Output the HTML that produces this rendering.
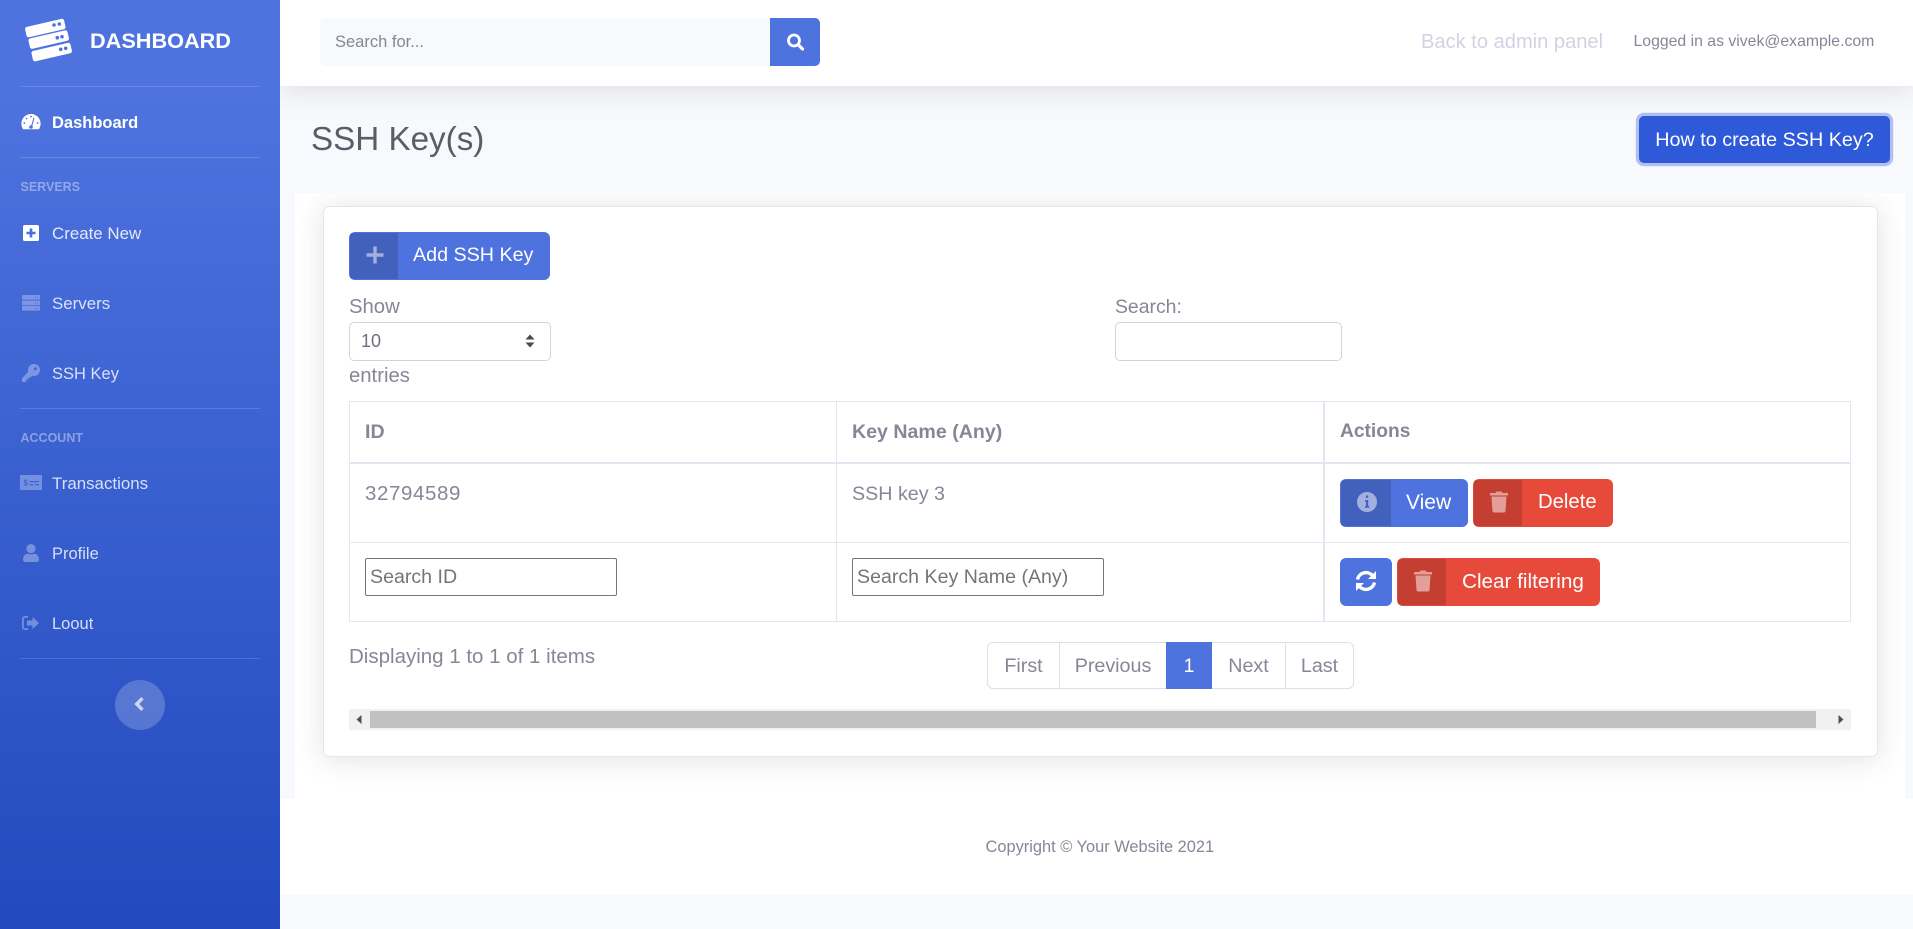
<!DOCTYPE html>
<html lang="en"><head><meta charset="utf-8"><title>SSH Key(s)</title>
<style>
html,body{margin:0;padding:0;width:1913px;height:929px;overflow:hidden;background:#f8f9fc;font-family:"Liberation Sans",sans-serif;color:#858796}
*{box-sizing:border-box}
.a{position:absolute}
.t{position:absolute;white-space:nowrap;line-height:24px;height:24px}
.side{left:0;top:0;width:280px;height:929px;background:linear-gradient(180deg,#4e73df 10%,#224abe 100%);z-index:3}
.hr{position:absolute;left:20px;width:240px;height:1px;background:rgba(255,255,255,.15)}
.nav{font-size:16.9px;color:rgba(255,255,255,.8);left:52px}
.hd{font-size:12.5px;font-weight:700;color:rgba(255,255,255,.4);left:20.5px}
.top{left:280px;top:0;width:1633px;height:86px;background:#fff;box-shadow:0 2.4px 28px rgba(58,59,69,.15);z-index:2}
.b{font-size:19.6px;font-weight:700}
.f{font-size:19.5px}
.btn{position:absolute;height:48px;border-radius:6px;color:#fff;font-size:19.7px;line-height:47px;overflow:hidden;white-space:nowrap}
.blue{background:#4e73df}.red{background:#e74a3b}
.ic{position:absolute;left:1px;top:1px;bottom:1px;width:48px;background:rgba(0,0,0,.15)}
.ic svg{position:absolute;left:calc(50% + .5px);top:calc(50% - 1.5px);transform:translate(-50%,-50%)}
.line{position:absolute;background:#e3e6f0}
input{position:absolute;font-family:"Liberation Sans",sans-serif;font-size:19.6px;padding:0 4px;margin:0;background:#fff;border:1px solid #767676;border-radius:2px;height:38px;width:252px}
input::placeholder{color:#757575;opacity:1}
.fc{position:absolute;height:39px;background:#fff;border:1px solid #d1d3e2;border-radius:5px}
.pg{position:absolute;top:642px;height:47px;line-height:46px;text-align:center;font-size:19.7px;color:#858796;background:#fff;border:1px solid #dddfeb}
</style></head><body>

<div class="a" style="left:280px;top:86px;width:1633px;height:843px;background:#f8f9fc"></div>
<div class="a" style="left:295px;top:193px;width:1610px;height:606px;background:#fff;overflow:hidden">
  <div class="a" style="left:28px;top:13px;width:1555px;height:551px;background:#fff;border:1px solid #e3e6f0;border-radius:6px;box-shadow:0 2.4px 28px rgba(58,59,69,.15)"></div>
</div>
<div class="a" style="left:280px;top:799px;width:1633px;height:96px;background:#fff"></div>

<!-- sidebar -->
<div class="a side">
  <svg class="a" style="left:20px;top:12px" width="60" height="56" viewBox="0 0 60 56">
    <g fill="#fff">
      <rect x="5.300" y="10.700" width="40" height="10.700" rx="2.200" transform="rotate(-13 25.300 16)"/>
      <rect x="8.700" y="22.200" width="40" height="10.700" rx="2.200" transform="rotate(-13 28.700 27.500)"/>
      <rect x="11.700" y="34.700" width="40" height="10.700" rx="2.200" transform="rotate(-13 31.700 40)"/>
    </g>
    <g fill="#4e73df">
      <circle cx="34" cy="13" r="1.800"/><circle cx="39.300" cy="12" r="1.800"/>
      <circle cx="37.300" cy="25.700" r="1.800"/><circle cx="42" cy="24.700" r="1.800"/>
      <circle cx="40.700" cy="37.300" r="1.800"/><circle cx="45.700" cy="36.300" r="1.800"/>
    </g>
  </svg>
  <div class="t" style="left:90px;top:29px;font-size:21.7px;font-weight:700;color:#fff">DASHBOARD</div>
  <div class="hr" style="top:86px"></div>
  <svg class="a" style="left:21px;top:113px" width="20" height="17" viewBox="0 0 20 17">
    <path fill="#fff" d="M10 1A9.6 9.6 0 0 0 .4 10.600c0 2.100.6 4 1.700 5.600h15.800c1.100-1.600 1.700-3.500 1.700-5.600A9.600 9.600 0 0 0 10 1z"/>
    <path stroke="#4e73df" stroke-width="1.100" fill="none" d="M10.500 13.500 13 5"/>
    <circle cx="10" cy="14" r="1.800" fill="#4e73df"/>
    <g fill="#4e73df"><circle cx="10" cy="3.600" r=".9"/><circle cx="5.500" cy="5.500" r=".9"/><circle cx="3.300" cy="10" r=".9"/><circle cx="16.700" cy="10" r=".9"/></g>
  </svg>
  <div class="t nav" style="top:111px;font-weight:700;color:#fff;font-size:16.5px">Dashboard</div>
  <div class="hr" style="top:157px"></div>
  <div class="t hd" style="top:175px">SERVERS</div>
  <svg class="a" style="left:23px;top:225px" width="16" height="16" viewBox="0 0 16 16">
    <rect width="16" height="16" rx="1.800" fill="#fff"/><path fill="#4872db" d="M6.700 3.500h2.600v3.200h3.200v2.600H9.300v3.200H6.700V9.300H3.500V6.700h3.200z"/>
  </svg>
  <div class="t nav" style="top:222px;color:rgba(255,255,255,.85)">Create New</div>
  <svg class="a" style="left:22px;top:295px" width="18" height="16" viewBox="0 0 18 16">
    <g fill="rgba(255,255,255,.3)"><rect width="18" height="4.600" rx=".8"/><rect y="5.600" width="18" height="4.600" rx=".3"/><rect y="11" width="18" height="4.600" rx=".8"/></g>
    <g fill="#4468d6"><rect x="13" y="2" width="1" height="1"/><rect x="15" y="2" width="1" height="1"/><rect x="13" y="7.500" width="1" height="1"/><rect x="15" y="7.500" width="1" height="1"/><rect x="13" y="13" width="1" height="1"/><rect x="15" y="13" width="1" height="1"/></g>
  </svg>
  <div class="t nav" style="top:292px">Servers</div>
  <svg class="a" style="left:22px;top:364px" width="18" height="18" viewBox="0 0 18 18">
    <path fill="rgba(255,255,255,.32)" fill-rule="evenodd" d="M12 0a6 6 0 0 0-5.700 7.900L0 14.200V18h4v-2.200h2.200v-2.200h2.200l1.700-1.900A6 6 0 1 0 12 0zm1.300 3.200a1.500 1.500 0 1 1 0 3 1.500 1.500 0 0 1 0-3z"/>
  </svg>
  <div class="t nav" style="top:362px;font-size:16.5px">SSH Key</div>
  <div class="hr" style="top:408px"></div>
  <div class="t hd" style="top:426px">ACCOUNT</div>
  <svg class="a" style="left:20px;top:475px" width="22" height="15" viewBox="0 0 22 15">
    <rect width="22" height="15" fill="rgba(255,255,255,.3)"/>
    <path fill="#3f62d2" d="M9.500 6h9.500v1.300H9.500zM9.500 9h3.800v1.300H9.500zM15 9h4v1.300h-4z"/>
    <text x="3.500" y="10.500" font-size="8" font-weight="700" fill="#3f62d2" font-family="Liberation Sans">$</text>
  </svg>
  <div class="t nav" style="top:472px">Transactions</div>
  <svg class="a" style="left:23px;top:544px" width="16" height="18" viewBox="0 0 16 18">
    <g fill="rgba(255,255,255,.32)"><circle cx="8" cy="4.600" r="4.600"/><path d="M0 15.500c0-3.800 2.500-5.800 4.700-5.800 1 0 1.800.6 3.300.6s2.300-.6 3.300-.6c2.200 0 4.700 2 4.700 5.800 0 1.500-1 2.500-2.300 2.500H2.300C1 18 0 17 0 15.500z"/></g>
  </svg>
  <div class="t nav" style="top:542px;font-size:16.5px">Profile</div>
  <svg class="a" style="left:22px;top:616px" width="17" height="14" viewBox="0 0 17 14">
    <g fill="rgba(255,255,255,.32)"><path d="M6 0v1.800H3A1.200 1.200 0 0 0 1.800 3v8c0 .7.500 1.200 1.200 1.200h3V14H3a3 3 0 0 1-3-3V3a3 3 0 0 1 3-3z"/><path d="M10.500.8 17 7l-6.500 6.200V9.500H5v-5h5.500z"/></g>
  </svg>
  <div class="t nav" style="top:612px;font-size:16.5px">Loout</div>
  <div class="hr" style="top:658px"></div>
  <div class="a" style="left:115px;top:680px;width:50px;height:50px;border-radius:50%;background:rgba(255,255,255,.2)"></div>
  <svg class="a" style="left:133px;top:697px" width="13" height="14" viewBox="0 0 13 14">
    <path fill="none" stroke="rgba(255,255,255,.7)" stroke-width="3.400" d="M9.500 1.200 3.700 7l5.800 5.800"/>
  </svg>
</div>

<!-- topbar -->
<div class="a top"></div>
<div class="a" style="left:320px;top:18px;width:500px;height:48px;background:#f8f9fc;border-radius:5px;z-index:2;overflow:hidden">
  <div class="a" style="right:0;top:0;width:50px;height:48px;background:#4e73df"></div>
  <svg class="a" style="left:466px;top:14.500px" width="19" height="18" viewBox="0 0 18 18">
    <circle cx="7.500" cy="7.500" r="5.500" fill="none" stroke="#fff" stroke-width="2.800"/><path stroke="#fff" stroke-width="3.200" stroke-linecap="round" d="M12 12l4 4"/>
  </svg>
</div>
<div class="t" style="left:335px;top:30px;font-size:16.5px;color:#858796;z-index:2">Search for...</div>
<div class="t" style="left:1421px;top:30px;font-size:20.1px;color:#d1d3e2;z-index:2">Back to admin panel</div>
<div class="t" style="left:1633.500px;top:30px;font-size:15.8px;color:#858796;z-index:2">Logged in as vivek@example.com</div>

<!-- heading -->
<div class="t" style="left:311px;top:120px;font-size:33.200px;line-height:40px;height:40px;color:#5a5c69">SSH Key(s)</div>
<div class="a" style="left:1639px;top:116px;width:251px;height:47px;background:#2e59d9;border-radius:5px;box-shadow:0 0 0 3.200px rgba(105,136,228,.5);color:#fff;font-size:19.750px;line-height:48px;text-align:center;white-space:nowrap">How to create SSH Key?</div>

<!-- controls -->
<div class="btn blue" style="left:349px;top:232px;width:201px">
  <span class="ic"><svg style="top:calc(50% - 1px)" width="19" height="19" viewBox="0 0 19 19"><path fill="rgba(255,255,255,.5)" d="M7.800 1h3.400v6.800H18v3.400h-6.800V18H7.800v-6.800H1V7.800h6.800z"/></svg></span>
  <span class="a" style="left:64px;top:0">Add SSH Key</span>
</div>
<div class="t f" style="left:349px;top:295px;font-size:20.3px">Show</div>
<div class="fc" style="left:349px;top:322px;width:202px"></div>
<div class="t" style="left:361px;top:329px;font-size:18px;color:#6e707e">10</div>
<svg class="a" style="left:524px;top:334px" width="12" height="14" viewBox="0 0 12 14"><path fill="#4a4a52" d="M6 .5 10.500 5.500H1.500zM6 13.500 1.500 8.500h9z"/></svg>
<div class="t f" style="left:349px;top:364px;font-size:20.3px">entries</div>
<div class="t f" style="left:1115px;top:295px;font-size:19.400px">Search:</div>
<div class="fc" style="left:1115px;top:322px;width:227px"></div>

<!-- table -->
<div class="line" style="left:349px;top:401px;width:1502px;height:1px"></div>
<div class="line" style="left:349px;top:462px;width:1502px;height:2px"></div>
<div class="line" style="left:349px;top:542px;width:1502px;height:1px"></div>
<div class="line" style="left:349px;top:621px;width:1502px;height:1px"></div>
<div class="line" style="left:349px;top:401px;width:1px;height:221px"></div>
<div class="line" style="left:836px;top:401px;width:1px;height:221px"></div>
<div class="line" style="left:1323px;top:401px;width:2px;height:221px"></div>
<div class="line" style="left:1850px;top:401px;width:1px;height:221px"></div>
<div class="t b" style="left:365px;top:420px">ID</div>
<div class="t b" style="left:852px;top:420px">Key Name (Any)</div>
<div class="t b" style="left:1340px;top:420px;font-size:19.200px">Actions</div>
<div class="t f" style="left:365px;top:482px;font-size:20.5px;letter-spacing:.6px">32794589</div>
<div class="t f" style="left:852px;top:482px;font-size:19.7px">SSH key 3</div>

<div class="btn blue" style="left:1340px;top:479px;width:128px">
  <span class="ic" style="width:50px"><svg width="20" height="20" viewBox="0 0 20 20"><circle cx="10" cy="10" r="10" fill="rgba(255,255,255,.5)"/><path fill="#4464c0" d="M8.800 3.500h2.400v2.400H8.800zM8 8h3.200v6h1v1.800H8V14h1V9.800H8z"/></svg></span>
  <span class="a" style="left:66px;top:0;font-size:21px">View</span>
</div>
<div class="btn red" style="left:1473px;top:479px;width:140px">
  <span class="ic"><svg width="18" height="21" viewBox="0 0 18 21"><path fill="rgba(255,255,255,.5)" d="M6.500 0h5l1 1.500H18v2.500H0V1.500h5.500zM1.500 5h15l-1 14.500c0 .8-.7 1.500-1.500 1.500H4c-.8 0-1.500-.7-1.500-1.500z"/></svg></span>
  <span class="a" style="left:65px;top:0;font-size:20.3px">Delete</span>
</div>

<input style="left:365px;top:558px" placeholder="Search ID">
<input style="left:852px;top:558px" placeholder="Search Key Name (Any)">

<div class="btn blue" style="left:1340px;top:558px;width:52px">
  <svg class="a" style="left:15px;top:12px" width="22" height="22" viewBox="0 0 22 22"><g fill="none" stroke="#fff" stroke-width="3.400"><path d="M2.500 9.500A8.700 8.700 0 0 1 17.500 5.500"/><path d="M19.500 12.500A8.700 8.700 0 0 1 4.500 16.500"/></g><path fill="#fff" d="M21 1v8h-8zM1 21v-8h8z"/></svg>
</div>
<div class="btn red" style="left:1397px;top:558px;width:203px">
  <span class="ic"><svg width="18" height="21" viewBox="0 0 18 21"><path fill="rgba(255,255,255,.5)" d="M6.500 0h5l1 1.500H18v2.500H0V1.500h5.500zM1.500 5h15l-1 14.500c0 .8-.7 1.500-1.500 1.500H4c-.8 0-1.500-.7-1.500-1.500z"/></svg></span>
  <span class="a" style="left:65px;top:0;font-size:20.700px">Clear filtering</span>
</div>

<div class="t f" style="left:349px;top:645px;font-size:20.5px">Displaying 1 to 1 of 1 items</div>

<!-- pagination -->
<div class="pg" style="left:987px;width:73px;border-radius:6px 0 0 6px">First</div>
<div class="pg" style="left:1059px;width:108px;border-left-width:1px">Previous</div>
<div class="pg" style="left:1166px;width:46px;background:#4e73df;border-color:#4e73df;color:#fff">1</div>
<div class="pg" style="left:1212px;width:74px;border-left:0">Next</div>
<div class="pg" style="left:1285px;width:69px;border-radius:0 6px 6px 0">Last</div>

<!-- scrollbar -->
<div class="a" style="left:349px;top:709px;width:1502px;height:21px;background:#f1f1f1"></div>
<div class="a" style="left:370px;top:711px;width:1446px;height:17px;background:#c1c1c1"></div>
<svg class="a" style="left:355px;top:714px" width="8" height="11" viewBox="0 0 8 11"><path fill="#505050" d="M6.500 1 1.500 5.500 6.500 10z"/></svg>
<svg class="a" style="left:1837px;top:714px" width="8" height="11" viewBox="0 0 8 11"><path fill="#505050" d="M1.500 1 6.500 5.500 1.500 10z"/></svg>

<div class="t" style="left:985.500px;top:835px;font-size:16.4px;color:#858796">Copyright © Your Website 2021</div>
</body></html>
